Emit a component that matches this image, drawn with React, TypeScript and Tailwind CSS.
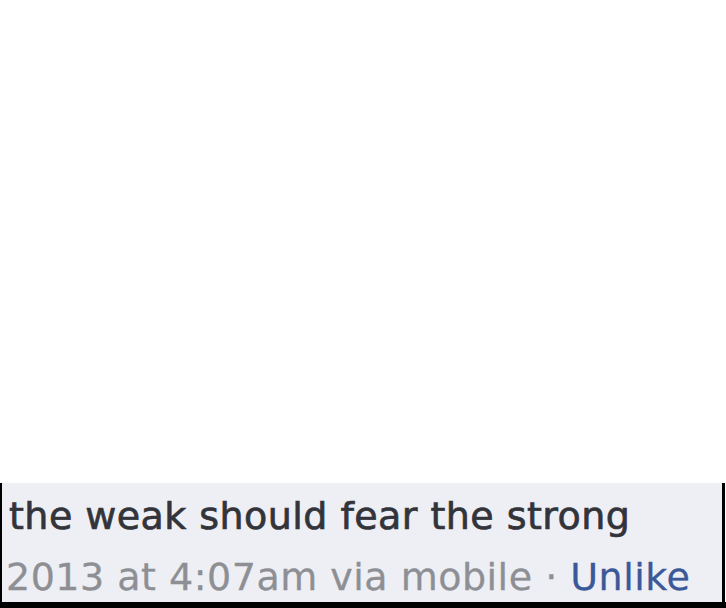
export default function App() {
  return (
    <div className="w-[726px] h-[608px] bg-white flex flex-col font-['DejaVu_Sans',sans-serif]">
      <div className="flex-1" />
      <div className="h-[119px] mr-[1px] border-l-2 border-r-[3px] border-black bg-[#edeff4] pt-[11px] overflow-hidden">
        <p className="pl-[7px] text-[38px] leading-[44px] tracking-[0.45px] text-[#32343a] whitespace-nowrap [-webkit-text-stroke:0.7px_#32343a]">
          the weak should fear the strong
        </p>
        <p className="mt-[17px] pl-[4px] text-[38px] leading-[44px] tracking-[0.5px] text-[#8d8f94] whitespace-nowrap [-webkit-text-stroke:0.3px_#8d8f94]">
          2013 at 4:07am via mobile · <a className="text-[#3b5998] [-webkit-text-stroke:0.3px_#3b5998]">Unlike</a>
        </p>
      </div>
      <div className="h-[6px] bg-black" />
    </div>
  );
}
